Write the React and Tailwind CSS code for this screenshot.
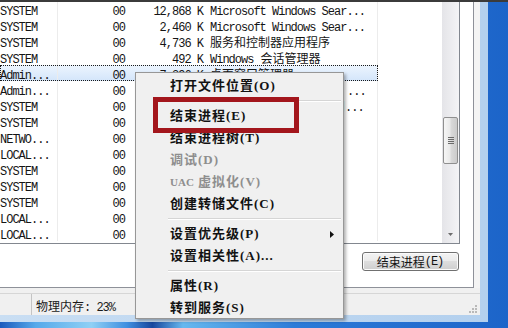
const LATIN = "font-['Liberation_Mono',monospace] text-[12px] tracking-[-1px] pr-[1px]";
const CJK = "font-['Noto_Sans_CJK_SC',sans-serif] text-[12px]";

// split a string into latin / cjk runs so each gets its own font
function Mixed({ s }) {
  const parts = s.match(/[\x00-\xff]+|[^\x00-\xff]+/g) || [];
  return parts.map((p, i) => (
    <span key={i} className={/^[\x00-\xff]/.test(p) ? LATIN : CJK}>
      {p}
    </span>
  ));
}

// rows lying under the context menu keep only what shows past its edge
const rows = [
  { user: "SYSTEM", mem: "12,868 K", desc: "Microsoft Windows Sear..." },
  { user: "SYSTEM", mem: "2,460 K", desc: "Microsoft Windows Sear..." },
  { user: "SYSTEM", mem: "4,736 K", desc: "服务和控制器应用程序" },
  { user: "SYSTEM", mem: "492 K", desc: "Windows 会话管理器" },
  { user: "Admin...", mem: "7,396 K", desc: "桌面窗口管理器", sel: true },
  { user: "Admin...", mem: "", desc: "...", tail: "pl-[141px]" },
  { user: "SYSTEM", mem: "", desc: "用...", tail: "pl-[127px]" },
  { user: "SYSTEM", mem: "", desc: "" },
  { user: "NETWO...", mem: "", desc: "" },
  { user: "LOCAL...", mem: "", desc: "" },
  { user: "SYSTEM", mem: "", desc: "" },
  { user: "SYSTEM", mem: "", desc: "" },
  { user: "SYSTEM", mem: "", desc: "" },
  { user: "LOCAL...", mem: "", desc: "" },
  { user: "LOCAL...", mem: "", desc: "" },
];

const menu = [
  { t: "打开文件位置(O)" },
  "sep",
  { t: "结束进程(E)" },
  { t: "结束进程树(T)" },
  { t: "调试(D)", dis: true },
  { t: " 虚拟化(V)", dis: true, uac: true },
  { t: "创建转储文件(C)" },
  "sep",
  { t: "设置优先级(P)", sub: true },
  { t: "设置相关性(A)..." },
  "sep",
  { t: "属性(R)" },
  { t: "转到服务(S)", last: true },
];

function Row({ r }) {
  return (
    <div className="flex h-[16px] leading-[16px] text-[#151515] whitespace-pre">
      <div className={`flex w-[378px] shrink-0 ${r.sel ? "bg-[linear-gradient(#edf5fe,#d3e5fa)] outline-1 outline-dotted outline-[#1a1a1a] -outline-offset-1" : ""}`}>
        <div className="w-[58px] shrink-0 border-r border-[#ececec]"><Mixed s={r.user} /></div>
        <div className="w-[70px] shrink-0 text-right pr-[2px]"><Mixed s="00" /></div>
        <div className="w-[78px] shrink-0 text-right pr-[2px]"><Mixed s={r.mem} /></div>
        <div className={`w-[172px] shrink-0 border-r border-[#ececec] ${r.tail || "pl-[4px]"}`}><Mixed s={r.desc} /></div>
      </div>
      <div className="flex-1" />
    </div>
  );
}

function Scrollbar() {
  return (
    <div className="w-[17px] h-full flex flex-col bg-[linear-gradient(90deg,#e4e4e8,#f4f4f6)]">
      <div className="h-[117px]" />
      <div className="h-[47px] mx-[1px] rounded-[2px] border border-[#8f8f8f] bg-[linear-gradient(90deg,#f6f6f6,#e9e9e9_45%,#d9d9d9_55%,#cbcbcb)] flex flex-col items-center justify-center gap-[1px]">
        <div className="w-[6px] h-px bg-[#6a6a6a]" />
        <div className="w-[6px] h-px bg-[#6a6a6a]" />
        <div className="w-[6px] h-px bg-[#6a6a6a]" />
        <div className="w-[6px] h-px bg-[#6a6a6a]" />
      </div>
      <div className="flex-1" />
      <div className="h-[17px] flex items-center justify-center">
        <svg width="5" height="3" viewBox="0 0 5 3">
          <path d="M0 0h5L2.5 3z" fill="#6d6d6d" />
        </svg>
      </div>
    </div>
  );
}

function ContextMenu() {
  return (
    <div className="absolute left-[135px] top-[72px] w-[209px] bg-[#f0f0f0] border border-[#979797] pt-[2px] shadow-[2px_2px_3px_rgba(0,0,0,0.3)] font-['Liberation_Serif','Noto_Sans_CJK_SC',serif] font-bold text-[13px] tracking-[1px]">
      {menu.map((m, i) =>
        m === "sep" ? (
          <div key={i} className="h-[8px] flex flex-col justify-center ml-[32px] mr-[2px]">
            <div className="h-px bg-[#d5d5d5]" />
            <div className="h-px bg-white" />
          </div>
        ) : (
          <div
            key={i}
            className={`flex items-center justify-between pl-[34px] pr-[9px] whitespace-pre ${m.last ? "h-[21px]" : "h-[22px]"} ${m.dis ? "text-[#8e8e8e]" : "text-[#121212]"}`}
          >
            <span>
              {m.uac && <span className="text-[11px] tracking-[0px]">UAC</span>}
              {m.t}
            </span>
            {m.sub && (
              <svg width="4" height="7" viewBox="0 0 4 7">
                <path d="M0 0L4 3.5L0 7z" fill="#111" />
              </svg>
            )}
          </div>
        )
      )}
    </div>
  );
}

export default function App() {
  return (
    <div className="w-[508px] h-[328px] relative overflow-hidden bg-[linear-gradient(90deg,#1a5abd_0%,#56a9ea_7%,#8fd0f5_18%,#3f8fe0_25%,#17479e_30%,#66b8ef_36%,#2c7bd8_58%,#1c64c9_100%)]">
      <div className="w-[488px] h-[322px] pr-[8px] pb-[7px] bg-[linear-gradient(90deg,#c9def3,#b3d0ee)]">
        <div className="w-[480px] h-[315px] bg-[#f0f0f0] flex flex-col">
          {/* tab page */}
          <div className="h-[288px] flex">
            <div className="w-[474px] h-full bg-white border-r border-b border-[#8e9199] flex flex-col">
              <div className="h-[244px] w-[460px] border-r border-b border-[#82878f] flex">
                <div className="w-[442px] h-full pt-[1px]">
                  {rows.map((r, i) => (
                    <Row key={i} r={r} />
                  ))}
                </div>
                <Scrollbar />
              </div>
              <div className="w-[460px] flex justify-end pt-[8px] pr-[1px]">
                <div className="w-[97px] h-[19px] rounded-[3px] border border-[#707070] bg-[linear-gradient(#f3f3f3,#ebebeb_45%,#dddddd_50%,#cfcfcf)] shadow-[inset_0_0_0_1px_#fbfbfb] flex items-center justify-center text-[#151515] leading-none whitespace-pre">
                  <Mixed s="结束进程(E)" />
                </div>
              </div>
            </div>
            <div className="flex-1 bg-[#f4f4f4]" />
          </div>
          {/* status bar */}
          <div className="flex-1 flex flex-col">
            <div className="h-[5px]" />
            <div className="flex-1 border-t border-[#d6d6d6] flex items-center text-[#1a1a1a] whitespace-pre">
              <div className="w-[32px] h-full border-r border-[#c4c4c4]" />
              <div className="pl-[4px] pt-[2px] leading-none">
                <Mixed s="物理内存: 23%" />
              </div>
              <div className="ml-auto self-end pr-[3px] pb-[2px]">
                <svg width="8" height="8" viewBox="0 0 8 8">
                  <rect x="6" y="0" width="2" height="2" fill="#b9b9b9" />
                  <rect x="3" y="3" width="2" height="2" fill="#b9b9b9" />
                  <rect x="6" y="3" width="2" height="2" fill="#b9b9b9" />
                  <rect x="0" y="6" width="2" height="2" fill="#b9b9b9" />
                  <rect x="3" y="6" width="2" height="2" fill="#b9b9b9" />
                  <rect x="6" y="6" width="2" height="2" fill="#b9b9b9" />
                </svg>
              </div>
            </div>
          </div>
        </div>
      </div>
      {/* dark edge of the screenshot, lying over the top of the window */}
      <div className="absolute left-0 top-0 w-full h-[2px] bg-[#3b3b3b]" />
      <ContextMenu />
      <div className="absolute left-[153px] top-[97px] w-[146px] h-[36px] border-[5px] border-[#a3161c]" />
    </div>
  );
}
